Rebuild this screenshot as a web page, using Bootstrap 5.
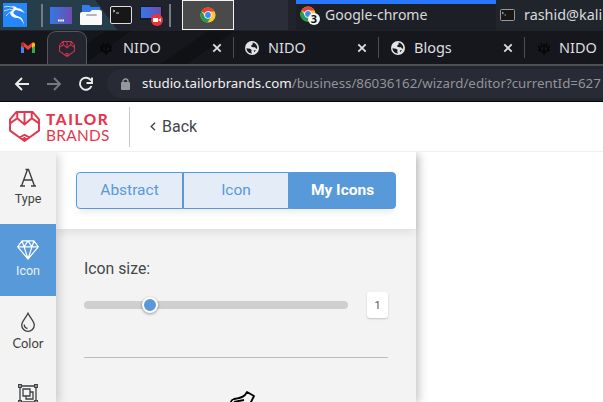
<!DOCTYPE html>
<html lang="en">
<head>
<meta charset="utf-8">
<title>Tailor Brands editor</title>
<link href="https://cdn.jsdelivr.net/npm/bootstrap@5.3.0/dist/css/bootstrap.min.css" rel="stylesheet">
<style>
html,body{width:603px;height:402px;overflow:hidden}
body{background:#fff;font-family:"Noto Sans",sans-serif;line-height:1}
svg{display:block;flex:none}
.txt{white-space:nowrap;flex:none}
.taskbar{height:30px;background:#20232b}
.launch{width:182px;height:30px;padding-left:3px;flex:none;background:linear-gradient(53.7deg,#263e4b 0 94px,#20232b 95px)}
.tick{width:2px;height:23px;background:#777b80;flex:none}
.tick.t1{margin-left:14px;margin-right:7px}
.tick.t2{margin-left:6px}
.current{width:52px;height:30px;background:#4a4a4b;border:1px solid #f2f2f2;flex:none}
.desk{width:54px;background:#2b2e39;flex:none}
.gap8{width:8px;background:#20232b;flex:none}
.task{height:30px;background:#20252c;color:#d9dadd;font-size:14.4px;padding-left:4px}
.task.on{width:200px;flex:none;background:#1d1f27;border-top:4px solid #2777ff;font-size:14.05px;padding-bottom:4px}
.task .lbl{margin-left:9px}
.tabs{height:36px;overflow:hidden;background:linear-gradient(145deg,#16171c 0 60px,#101115 61px 75px,#16171c 76px 118px,#101115 120px 134px,#16171c 135px);border-bottom:2px solid #4d5053;border-top:1px solid #202229;color:#dedfe1}
.pinned{width:47px;flex:none}
.livetab{width:40px;height:35px;flex:none;border:1px solid #55575b;border-bottom:0;border-radius:9px 9px 0 0;background:#23252f}
.tabitem{width:146px;height:33px;font-size:14.5px;flex:none}
.tabitem .name{width:89px;margin-left:9px}
.tabitem.first{margin-left:12px}
.tabitem.first .name{margin-left:10px}
.tabitem.last{width:58px}
.tabitem.last .name{width:auto;margin-left:8px}
.sep{width:1px;height:21px;background:#4b4d52;margin-left:11px}
.address{height:36px;background:#22242e;border-bottom:1px solid #060709;padding-left:13px}
.url{width:496px;height:29px;background:#282a35;border-radius:15px 0 0 15px;color:#919499;font-size:13.33px;padding-left:14px}
.url b{font-weight:400;color:#eff0f2}
.url .txt{margin-left:12px}
.site{font-family:Roboto,sans-serif;color:#44474a}
.sitehead{height:50px;background:#fff;border-bottom:1px solid #f0f0f0;padding-left:9px}
.brandname{font-family:Lato,sans-serif;color:#e2384f;width:66px;margin-left:6px;flex:none}
.brandname div{height:16px;line-height:16px;white-space:nowrap}
.b1{font-size:15.4px;font-weight:900;letter-spacing:1.6px}
.b2{font-size:15.4px;letter-spacing:.3px}
.rule{width:1px;height:40px;background:#c8c8c8;margin:0 20px 0 17px}
.back{font-size:16px;margin-left:6px}
.work{height:250px;overflow:hidden}
.rail{width:56px;background:#f3f3f3;box-shadow:2px 2px 10px #0003;z-index:2;position:relative;flex:none}
.tool{height:72px;font-size:12.5px;color:#3d3f41;padding-top:16px;gap:5px}
.tool.on{background:#5899d9;color:#eaf3fb}
.lato{font-family:Lato,sans-serif;font-size:13px}
.panel{width:360px;background:#f3f3f3;box-shadow:2px 2px 10px #0004;position:relative;z-index:1;flex:none}
.switcher{height:77px;background:#fff;padding:20px 20px;box-shadow:0 3px 9px #00000017}
.seg{height:37px;width:320px;border-radius:4px;box-shadow:0 5px 8px -3px #0000001c}
.seg .btn,.seg .btn:hover{border:1px solid #5899d9;color:#5899d9;background:#e4edf7;font-size:15.5px;line-height:1;padding:0;height:37px;flex:none;width:107px}
.seg .btn:first-child{border-radius:4px 0 0 4px}
.seg .btn:nth-child(2){width:106px;border-radius:0}
.seg .btn:last-child{border-radius:0 4px 4px 0;background:#5899d9;color:#fff;font-weight:700}
.content{padding:32px 28px 0}
.label{font-size:15.8px;height:17px;margin-bottom:14px}
.track{width:264px;height:8px;border-radius:4px;background:#cfcfcf;padding-left:58px}
.knob{width:16px;height:16px;border:2px solid #fff;border-radius:50%;background:#5899d9;box-shadow:0 1px 3px #0006}
.num{width:21px;height:26px;border-radius:3px;background:#fff;box-shadow:0 1px 2px #0003;font-size:11px;color:#555}
.line{height:1px;background:#bcbcbc;margin-top:39px}
.sketch{margin:33px 0 0 145px}
</style>
</head>
<body>
<svg width="0" height="0" class="position-absolute"><defs>
<symbol id="chrome" viewBox="0 0 16 16"><circle cx="8" cy="8" r="7.6" fill="#fbc935"/><path d="M8 8 1.4 4.2A7.6 7.6 0 0 1 14.6 4.4H8z" fill="#e24336"/><path d="M1.4 4.2A7.6 7.6 0 0 0 7.5 15.6L11 9.8 8 8 5 9.8z" fill="#229b55"/><circle cx="8" cy="8" r="3.7" fill="#fff"/><circle cx="8" cy="8" r="2.9" fill="#4285f4"/></symbol>
<symbol id="globe" viewBox="0 0 14 14"><circle cx="7" cy="7" r="7" fill="#e3e4e5"/><path d="M1.5 7.2 5 7.8l1.8 1.1-.6 1.3.8 2.2C4 12.5 1.5 10 1.5 7.2zM7.2 1.6 8 3 6.5 4.2 6 5.4 8 6.2h2l1.2 1.5 1-.3c.4-3-2-5.5-5-5.8zM8.7 9.5l2.4-.6-2 2.4z" fill="#17181e"/></symbol>
<symbol id="cross" viewBox="0 0 10 10"><path d="m1.300 1.300 7.400 7.400m0-7.400L1.300 8.700" stroke="#dfe0e2" stroke-width="1.800"/></symbol>
<symbol id="bloom" viewBox="0 0 14 14"><path d="M7 14V3M7 11Q3 11 3 7M7 11q4 0 4-4M1 5l3 2M13 5l-3 2M4 2l1 4M10 2 9 6M1 9l3 1M13 9l-3 1" stroke="#050607" stroke-width="1.600" fill="none"/></symbol>
<symbol id="gem" viewBox="0 0 30 30"><g fill="none" stroke="currentColor" stroke-width="1.900" stroke-linejoin="round"><path d="M7 1h16l6 7v11L15 29 1 19V8zM1 12l7-5 7 6 7-6 7 5M8 1v6M15 1v12M22 1v6M10.500 25.500 15 23l4.500 2.500"/></g><path d="m12 27 3-2 3 2-3 2z" fill="currentColor"/></symbol>
<linearGradient id="p" x2="1"><stop stop-color="#3478e6"/><stop offset="1" stop-color="#6d4db0"/></linearGradient>
</defs></svg>

<div class="taskbar d-flex overflow-hidden">
  <div class="launch d-flex align-items-center">
    <svg width="24" height="24"><path d="M0 0h24v24H0z" fill="#2587fa"/><path d="M1 4q7-2 10 2M1 8q6-3 10-1M3 13q3-5 8-5" stroke="#cde6ff" stroke-width=".9" fill="none"/><path d="M8 3q5 0 6 2l4 1 4 4-5-2-4-1q-4 1-2 4 2 2 6 3 3 1 4 8-2-6-6-7-7 0-8-5Q8 8 11 6q0-2-3-3z" fill="#fff"/></svg>
    <div class="tick t1"></div>
    <svg width="22" height="18"><path d="M0 1h22v17H0z" fill="url(#p)"/><path d="M8 14.500h6" stroke="#fff" stroke-width="2" stroke-dasharray="1.600 .6"/></svg>
    <svg width="22" height="20" class="ms-2"><path d="M2 0h7l2 2h9v9H2z" fill="#367be8"/><path d="M0 9q0-2 2-2h8l2-2h8q2 0 2 2v12q0 1-1 1H1q-1 0-1-1z" fill="#fafafa"/><path d="M7 10h9" stroke="#b5b5b5" stroke-width="2" stroke-linecap="round"/></svg>
    <svg width="22" height="18" class="ms-2"><rect x=".5" y=".5" width="21" height="17" rx="1.500" fill="#171717" stroke="#dedede"/><path d="m3 4 2 1-2 1m3 1h3" stroke="#ccc" fill="none"/></svg>
    <svg width="23" height="22" class="ms-2"><path d="M0 2h22v14H0z" fill="#171a28"/><path d="M1 3h20v11H1z" fill="url(#p)"/><circle cx="17" cy="16" r="6" fill="#ef3036"/><path d="M13 14h5v4h-5zm5 2 3-2v4z" fill="#fff"/></svg>
    <div class="tick t2"></div>
  </div>
  <div class="current d-flex align-items-center justify-content-center"><svg width="16" height="16"><use href="#chrome"/></svg></div>
  <div class="desk"></div><div class="gap8"></div>
  <div class="task on d-flex align-items-center"><svg width="21" height="21" viewBox="0 -1 21 21"><use href="#chrome" width="16" height="16"/><circle cx="14" cy="13" r="6" fill="#f5f5f1"/><text x="10.800" y="17" font-family="Noto Sans" font-weight="700" font-size="11" fill="#111">3</text></svg><span class="txt ms-1">Google-chrome</span></div>
  <div class="task d-flex align-items-center flex-grow-1"><svg width="15" height="12"><rect x=".5" y=".5" width="14" height="11" rx="1" fill="#171717" stroke="#999"/><path d="m2 3 1.500 1L2 5m2.500 1H6" stroke="#aaa" fill="none"/></svg><span class="txt lbl">rashid@kali</span></div>
</div>

<div class="tabs d-flex">
  <div class="pinned d-flex align-items-center justify-content-center ps-2"><svg width="14" height="11"><path d="M0 2v9h3V4z" fill="#4285f4"/><path d="M11 4v7h3V2z" fill="#34a853"/><path d="M1.500 1.500 7 6l5.500-4.500" stroke="#ea4335" stroke-width="3" fill="none"/><path d="M0 2q0-2 2-1.500L3 2v4L0 4z" fill="#b52d25"/><path d="M14 2q0-2-2-1.500L11 2v4l3-2z" fill="#fbbc04"/></svg></div>
  <div class="livetab d-flex align-items-center justify-content-center"><svg width="16" height="16" color="#cf3550"><use href="#gem"/></svg></div>
  <div class="tabitem first d-flex align-items-center"><svg width="14" height="14"><use href="#bloom"/></svg><span class="name txt">NIDO</span><svg width="10" height="10"><use href="#cross"/></svg><div class="sep"></div></div>
  <div class="tabitem d-flex align-items-center"><svg width="14" height="14"><use href="#globe"/></svg><span class="name txt">NIDO</span><svg width="10" height="10"><use href="#cross"/></svg><div class="sep"></div></div>
  <div class="tabitem d-flex align-items-center"><svg width="14" height="14"><use href="#globe"/></svg><span class="name txt">Blogs</span><svg width="10" height="10"><use href="#cross"/></svg><div class="sep"></div></div>
  <div class="tabitem last d-flex align-items-center"><svg width="14" height="14"><use href="#bloom"/></svg><span class="name txt">NIDO</span></div>
</div>

<div class="address d-flex align-items-center overflow-hidden">
  <svg width="94" height="18" fill="none" stroke-width="1.900"><path d="M16 9H3m6-6L3 9l6 6" stroke="#eceded"/><path d="M34 9h13m-6-6 6 6-6 6" stroke="#76787d"/><path d="M78 5.500A6 6 0 1 0 78.500 11M79 2.500V8h-5.500" stroke="#eceded"/></svg>
  <div class="url d-flex align-items-center flex-shrink-0"><svg width="9" height="12"><path d="M2 5V3.500a2.500 2.500 0 0 1 5 0V5" fill="none" stroke="#94979d" stroke-width="1.400"/><rect y="4" width="9" height="8" rx="1" fill="#94979d"/></svg><span class="txt"><b>studio.tailorbrands.com</b>/business/86036162/wizard/editor?currentId=627</span></div>
</div>

<div class="site">
  <header class="sitehead d-flex align-items-center">
    <svg width="31" height="31" color="#e2384f"><use href="#gem"/></svg>
    <div class="brandname"><div class="b1">TAILOR</div><div class="b2">BRANDS</div></div>
    <div class="rule"></div>
    <svg width="6" height="9"><path d="M5 .8 1.200 4.500 5 8.200" fill="none" stroke="#44474a" stroke-width="1.400"/></svg><span class="back">Back</span>
  </header>
  <div class="work d-flex">
    <nav class="rail">
      <div class="tool d-flex flex-column align-items-center"><svg width="20" height="20" viewBox="0 0 20 20"><path d="M3.500 18 9.500 1.500h1L16.500 18M6 12h8M2 18h5m6 0h5M7.500 1.500h3" fill="none" stroke="#3d3f41" stroke-width="1.400"/></svg><span>Type</span></div>
      <div class="tool on d-flex flex-column align-items-center"><svg width="22" height="20" viewBox="0 0 22 20" fill="none" stroke="#fff" stroke-width="1.200" stroke-linejoin="round"><path d="M5 .8h12l4.300 6L11 19 .7 6.800zM.7 6.800h20.600M5 .8l2 6 4 12 4-12 2-6M7 6.800l4-6 4 6"/></svg><span>Icon</span></div>
      <div class="tool d-flex flex-column align-items-center"><svg width="16" height="20" viewBox="0 0 16 20" fill="none" stroke="#3d3f41" stroke-width="1.300"><path d="M8 1.200C6 5.500 1.700 9.500 1.700 13a6.300 6.300 0 0 0 12.600 0C14.300 9.500 10 5.500 8 1.200z"/><path d="M4.200 12.500q.2 3.500 3.300 4"/></svg><span class="lato">Color</span></div>
      <div class="tool d-flex flex-column align-items-center"><svg width="20" height="20" viewBox="0 0 20 20" fill="none" stroke="#3d3f41" stroke-width="1.300"><path d="M2 2h16v16H2zM5 5h7v7H5zM12 8h3v7H8v-3"/><path fill="#f3f3f3" d="M.7.7h2.600v2.600H.7zM16.700.7h2.600v2.600h-2.600zM.7 16.700h2.600v2.600H.7zM16.700 16.700h2.600v2.600h-2.600z"/></svg></div>
    </nav>
    <main class="panel">
      <div class="switcher"><div class="seg btn-group"><button class="btn ms-0">Abstract</button><button class="btn ms-0">Icon</button><button class="btn ms-0">My Icons</button></div></div>
      <div class="content">
        <div class="label">Icon size:</div>
        <div class="d-flex align-items-center justify-content-between"><div class="track d-flex align-items-center"><div class="knob"></div></div><div class="num d-flex align-items-center justify-content-center">1</div></div>
        <div class="line"></div>
        <svg class="sketch" width="28" height="12" fill="none" stroke="#000" stroke-width="1.800" stroke-linejoin="round"><path d="M1 16q0-7 4-8 8-1 11-4l2-3 7 4-4 8M5 11l10-2"/></svg>
      </div>
    </main>
  </div>
</div>
</body>
</html>
